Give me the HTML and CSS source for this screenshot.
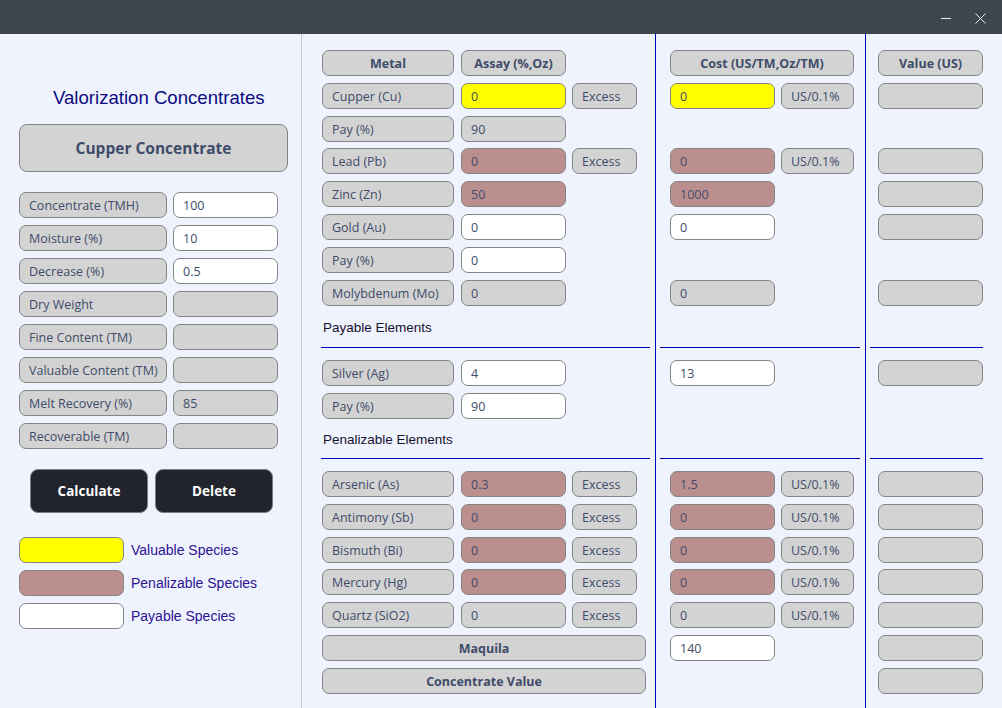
FILE: index.html
```html
<!DOCTYPE html>
<html lang="en">
<head>
<meta charset="utf-8">
<title>Valorization Concentrates</title>
<link rel="stylesheet" href="styles.css">
</head>
<body>
<div class="window">
  <header class="titlebar">
    <svg class="win-btn" width="10" height="10" viewBox="0 0 10 10"><line x1="0" y1="5.5" x2="10" y2="5.5" stroke="#e9ecef" stroke-width="1"/></svg>
    <svg class="win-btn" width="11" height="11" viewBox="0 0 11 11"><path d="M0.5 0.5 L10.5 10.5 M10.5 0.5 L0.5 10.5" stroke="#e9ecef" stroke-width="1" fill="none"/></svg>
  </header>
  <main class="content">
    <section class="panel panel-left">
      <h1 class="app-title">Valorization Concentrates</h1>
      <div class="box head card-btn">Cupper Concentrate</div>
      <div class="fields">
        <div class="row"><div class="box lbl">Concentrate (TMH)</div><div class="box val white">100</div></div>
        <div class="row"><div class="box lbl">Moisture (%)</div><div class="box val white">10</div></div>
        <div class="row"><div class="box lbl">Decrease (%)</div><div class="box val white">0.5</div></div>
        <div class="row"><div class="box lbl">Dry Weight</div><div class="box val"></div></div>
        <div class="row"><div class="box lbl">Fine Content (TM)</div><div class="box val"></div></div>
        <div class="row"><div class="box lbl">Valuable Content (TM)</div><div class="box val"></div></div>
        <div class="row"><div class="box lbl">Melt Recovery (%)</div><div class="box val">85</div></div>
        <div class="row"><div class="box lbl">Recoverable (TM)</div><div class="box val"></div></div>
      </div>
      <div class="actions">
        <button class="dark-btn">Calculate</button>
        <button class="dark-btn">Delete</button>
      </div>
      <div class="legend">
        <div class="legend-item"><span class="swatch yellow"></span><span class="legend-text">Valuable Species</span></div>
        <div class="legend-item"><span class="swatch rosy"></span><span class="legend-text">Penalizable Species</span></div>
        <div class="legend-item"><span class="swatch white"></span><span class="legend-text">Payable Species</span></div>
      </div>
    </section>

    <section class="panel panel-metal">
      <div class="row"><div class="box head lbl">Metal</div><div class="box head val">Assay (%,Oz)</div></div>
      <div class="row"><div class="box lbl">Cupper (Cu)</div><div class="box val yellow">0</div><div class="box unit">Excess</div></div>
      <div class="row tight"><div class="box lbl">Pay (%)</div><div class="box val">90</div></div>
      <div class="row"><div class="box lbl">Lead (Pb)</div><div class="box val rosy">0</div><div class="box unit">Excess</div></div>
      <div class="row"><div class="box lbl">Zinc (Zn)</div><div class="box val rosy">50</div></div>
      <div class="row"><div class="box lbl">Gold (Au)</div><div class="box val white">0</div></div>
      <div class="row"><div class="box lbl">Pay (%)</div><div class="box val white">0</div></div>
      <div class="row"><div class="box lbl">Molybdenum (Mo)</div><div class="box val">0</div></div>
      <div class="section sec-pay">Payable Elements</div>
      <div class="row"><div class="box lbl">Silver (Ag)</div><div class="box val white">4</div></div>
      <div class="row"><div class="box lbl">Pay (%)</div><div class="box val white">90</div></div>
      <div class="section sec-pen">Penalizable Elements</div>
      <div class="row"><div class="box lbl">Arsenic (As)</div><div class="box val rosy">0.3</div><div class="box unit">Excess</div></div>
      <div class="row"><div class="box lbl">Antimony (Sb)</div><div class="box val rosy">0</div><div class="box unit">Excess</div></div>
      <div class="row tight"><div class="box lbl">Bismuth (Bi)</div><div class="box val rosy">0</div><div class="box unit">Excess</div></div>
      <div class="row"><div class="box lbl">Mercury (Hg)</div><div class="box val rosy">0</div><div class="box unit">Excess</div></div>
      <div class="row"><div class="box lbl">Quartz (SiO2)</div><div class="box val">0</div><div class="box unit">Excess</div></div>
      <div class="row"><div class="box head wide">Maquila</div></div>
      <div class="row"><div class="box head wide">Concentrate Value</div></div>
    </section>

    <section class="panel panel-cost">
      <div class="row"><div class="box head cost-head">Cost (US/TM,Oz/TM)</div></div>
      <div class="row"><div class="box val yellow">0</div><div class="box unit">US/0.1%</div></div>
      <div class="row tight"></div>
      <div class="row"><div class="box val rosy">0</div><div class="box unit">US/0.1%</div></div>
      <div class="row"><div class="box val rosy">1000</div></div>
      <div class="row"><div class="box val white">0</div></div>
      <div class="row"></div>
      <div class="row"><div class="box val">0</div></div>
      <div class="section sec-pay"></div>
      <div class="row"><div class="box val white">13</div></div>
      <div class="row"></div>
      <div class="section sec-pen"></div>
      <div class="row"><div class="box val rosy">1.5</div><div class="box unit">US/0.1%</div></div>
      <div class="row"><div class="box val rosy">0</div><div class="box unit">US/0.1%</div></div>
      <div class="row tight"><div class="box val rosy">0</div><div class="box unit">US/0.1%</div></div>
      <div class="row"><div class="box val rosy">0</div><div class="box unit">US/0.1%</div></div>
      <div class="row"><div class="box val">0</div><div class="box unit">US/0.1%</div></div>
      <div class="row"><div class="box val white">140</div></div>
      <div class="row"></div>
    </section>

    <section class="panel panel-value">
      <div class="row"><div class="box head val">Value (US)</div></div>
      <div class="row"><div class="box val"></div></div>
      <div class="row tight"></div>
      <div class="row"><div class="box val"></div></div>
      <div class="row"><div class="box val"></div></div>
      <div class="row"><div class="box val"></div></div>
      <div class="row"></div>
      <div class="row"><div class="box val"></div></div>
      <div class="section sec-pay"></div>
      <div class="row"><div class="box val"></div></div>
      <div class="row"></div>
      <div class="section sec-pen"></div>
      <div class="row"><div class="box val"></div></div>
      <div class="row"><div class="box val"></div></div>
      <div class="row tight"><div class="box val"></div></div>
      <div class="row"><div class="box val"></div></div>
      <div class="row"><div class="box val"></div></div>
      <div class="row"><div class="box val"></div></div>
      <div class="row"><div class="box val"></div></div>
    </section>
  </main>
</div>
</body>
</html>
```

FILE: styles.css
```css
* {
  box-sizing: border-box;
  margin: 0;
  padding: 0;
}

html, body {
  width: 1002px;
  height: 708px;
  overflow: hidden;
}

body {
  background: #eff3fd;
  font-family: "Open Sans", "Noto Sans", sans-serif;
}

.window {
  display: flex;
  flex-direction: column;
  height: 708px;
}

.titlebar {
  height: 34px;
  background: #3e4650;
  display: flex;
  justify-content: flex-end;
  align-items: center;
  gap: 24px;
  padding: 2px 16px 0 0;
}

.win-btn {
  display: block;
}

.content {
  display: flex;
  flex: 1;
}

.panel {
  display: flex;
  flex-direction: column;
  height: 674px;
}

.panel-left {
  width: 302px;
  border-right: 1px solid #c5c7ce;
  padding: 53px 0 0 19px;
}

.panel-metal {
  width: 354px;
  border-right: 1px solid #0000b4;
  padding: 16px 5px 0 19px;
}

.panel-cost {
  width: 210px;
  border-right: 1px solid #0000b4;
  padding: 16px 5px 0 4px;
}

.panel-value {
  flex: 1;
  padding: 16px 19px 0 4px;
}

.row {
  display: flex;
  height: 26px;
  margin-bottom: 7px;
  gap: 6px;
  flex-shrink: 0;
}

.row.tight { margin-bottom: 6px; }

.panel-metal .row { margin-left: 1px; }
.panel-cost .row { margin-left: 10px; }
.panel-value .row { margin-left: 8px; }

.box {
  display: flex;
  align-items: center;
  height: 26px;
  border: 1px solid #858585;
  border-radius: 7px;
  background: #d3d3d3;
  color: #3e4c69;
  font-size: 12.5px;
  padding-left: 9px;
  white-space: nowrap;
  flex-shrink: 0;
}

.box.yellow { background: #ffff00; }
.box.rosy { background: #bc8f8f; }
.box.white { background: #ffffff; }

.box.head {
  justify-content: center;
  padding-left: 0;
  font-weight: 700;
}

.lbl { width: 132px; }
.panel-metal .lbl + .val { margin-left: 1px; }
.val { width: 105px; }
.unit { width: 65px; }
.panel-cost .unit { width: 73px; }
.wide { width: 324px; }
.cost-head { width: 184px; }

.section {
  flex-shrink: 0;
  border-bottom: 1px solid #0000b4;
  margin-bottom: 12px;
  padding: 0 0 12px 2px;
  display: flex;
  align-items: flex-end;
  font-family: "Liberation Sans", Arial, sans-serif;
  font-size: 13.5px;
  line-height: 15px;
  color: #18102e;
}

.section.sec-pay {
  height: 35px;
}

.section.sec-pen {
  height: 33px;
  padding-bottom: 11px;
}

/* Left panel */
.app-title {
  margin-left: 34px;
  font-family: "Liberation Sans", Arial, sans-serif;
  font-weight: 400;
  font-size: 18.6px;
  line-height: 21px;
  color: #0b0b80;
}

.card-btn {
  margin-top: 16px;
  width: 269px;
  height: 48px;
  font-size: 15.5px;
  border-radius: 8px;
}

.fields {
  margin-top: 20px;
}

.panel-left .lbl { width: 148px; }

.actions {
  display: flex;
  gap: 7px;
  margin: 13px 0 0 11px;
}

.dark-btn {
  width: 118px;
  height: 44px;
  background: #21242d;
  border: 1px solid #7d7f85;
  border-radius: 8px;
  color: #ffffff;
  font-family: "Open Sans", "Noto Sans", sans-serif;
  font-weight: 700;
  font-size: 13.5px;
}

.legend {
  margin-top: 24px;
  display: flex;
  flex-direction: column;
  gap: 7px;
}

.legend-item {
  display: flex;
  align-items: center;
  gap: 7px;
  height: 26px;
}

.swatch {
  width: 105px;
  height: 26px;
  border: 1px solid #858585;
  border-radius: 7px;
}

.swatch.yellow { background: #ffff00; }
.swatch.rosy { background: #bc8f8f; }
.swatch.white { background: #ffffff; }

.legend-text {
  font-family: "Liberation Sans", Arial, sans-serif;
  font-size: 14px;
  color: #2c1294;
}
```
